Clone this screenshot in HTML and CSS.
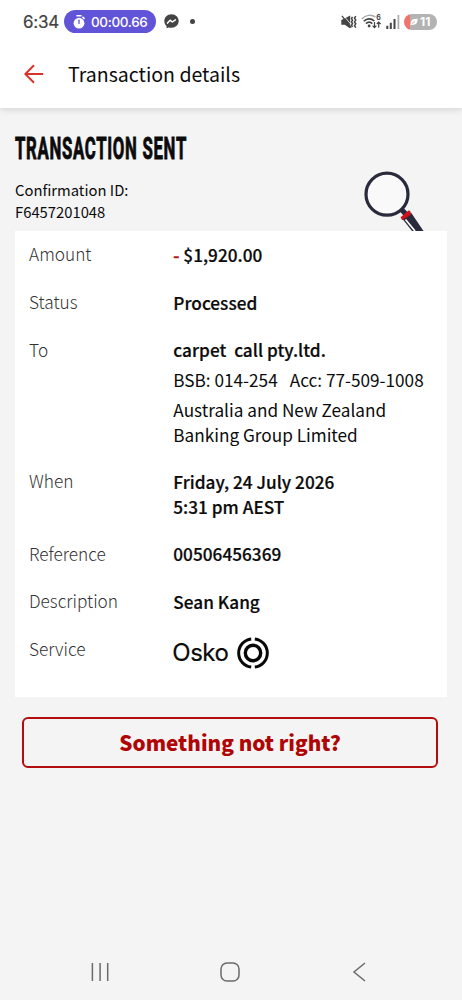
FILE: index.html
```html
<!DOCTYPE html>
<html lang="en">
<head>
<meta charset="utf-8">
<title>Transaction details</title>
<link rel="stylesheet" href="styles.css">
</head>
<body>
<div class="screen">
  <header class="top">
    <div class="statusbar">
      <span class="clock">6:34</span>
      <span class="timer">
        <svg class="timer-icon" width="12" height="14" viewBox="0 0 12 14"><circle cx="6" cy="8.2" r="5.4" fill="#fff"/><path d="M4 .8h4M10 2.4l1 1" stroke="#fff" stroke-width="1.6" stroke-linecap="round"/><path d="M6 5.2v3.2" stroke="#6254d8" stroke-width="1.3" stroke-linecap="round"/></svg>
        <span class="timer-text">00:00.66</span>
      </span>
      <svg class="messenger" width="15" height="15" viewBox="0 0 15 15"><path d="M7.5.3C3.300.3.3 3.300.3 7.100c0 2 .8 3.800 2.200 5l.1 2.200 2.100-.9c.9.300 1.800.4 2.800.4 4.200 0 7.200-3 7.200-6.700S11.700.3 7.500.3z" fill="#444"/><path d="M3.500 9.100l2.600-2.900 2.200 1.800 3.100-2.100" fill="none" stroke="#fff" stroke-width="1.500" stroke-linejoin="round" stroke-linecap="round"/></svg>
      <span class="dot"></span>
      <svg class="mute" width="16" height="14" viewBox="0 0 16 14"><path d="M.3 4.900L2.500 4 9.200.5v13L3.800 9.800H.3z" fill="#444"/><path d="M2.300.3l7.200 8.500" stroke="#fff" stroke-width=".8"/><path d="M.9.900l9.300 11.800" stroke="#444" stroke-width="1.300"/><path d="M11.500 1.800l-1 1.700 1 1.700-1 1.700 1 1.700-1 1.700 1 1.700M14.800 1.200l-1.300 1.900 1.300 1.900-1.300 1.900 1.300 1.900-1.300 1.900 1.300 1.900" fill="none" stroke="#444" stroke-width="1.500"/></svg>
      <svg class="wifi" width="21" height="15" viewBox="0 0 21 15"><path d="M.8 5C4.600.7 10.500.3 14.500 3" fill="none" stroke="#aaa" stroke-width="1.500"/><path d="M2.800 7.300c3-3.200 7.500-3.200 10.500-.3M5 9.600c2-2 4.400-2 6.300 0" fill="none" stroke="#444" stroke-width="1.600"/><circle cx="8.100" cy="12" r="1.400" fill="#444"/><path d="M13.500 8v5.500M11.600 11.700l1.900 2 1.900-2M17.700 13.800V8.300M15.800 10l1.900-2 1.900 2" fill="none" stroke="#444" stroke-width="1.200"/><text x="15.300" y="6.300" class="wifi-no">6</text></svg>
      <svg class="signal" width="14" height="14" viewBox="0 0 14 14"><path d="M1.300 10.800V14M4.800 7.800V14M8.500 4V14" stroke="#444" stroke-width="2"/><path d="M12.400 0v14" stroke="#aaa" stroke-width="1.700"/></svg>
      <span class="battery"><svg width="8" height="8" viewBox="0 0 8 8"><path d="M1 4C1.700.8 4.500 1 7.700.8 7.500 4.300 6.500 7 3.200 6.700 2 6.700 1.300 7 .3 7.400z" fill="#fff"/><path d="M1.500 6L5 3.500" stroke="#e88" stroke-width=".7"/></svg><span>11</span></span>
    </div>
    <div class="appbar">
      <svg class="back" width="20" height="20" viewBox="0 0 20 20"><path d="M19.200 10H1.500M10 1.300L1.300 10l8.700 8.700" fill="none" stroke="#d8322b" stroke-width="2"/></svg>
      <h1 class="bar-title">Transaction details</h1>
    </div>
  </header>
  <main class="main">
    <div class="summary">
      <div>
        <h2 class="heading">TRANSACTION SENT</h2>
        <p class="confirm">Confirmation ID:<br>F6457201048</p>
      </div>
      <svg class="glass" width="64" height="62" viewBox="0 0 64 62"><circle cx="25" cy="25.200" r="21" fill="#f9f9fa" stroke="#292a3b" stroke-width="3.200"/><path d="M37.500 42l4 4.500 4-3.500-4-4z" fill="#292a3b"/><path d="M43 47.500l6-4L61.500 62H50L40.500 50z" fill="#292a3b"/><path d="M43.500 50.500L53 62" stroke="#fff" stroke-width="1.700"/><path d="M38.600 48.200l1.500 3 8.800-5.500-.5-3.200-1.500-1.300z" fill="#cf1118"/></svg>
    </div>
    <dl class="card">
      <div class="row row-amount"><dt>Amount</dt><dd class="strong amount"><span class="minus">-</span> $1,920.00</dd></div>
      <div class="row"><dt>Status</dt><dd class="strong status">Processed</dd></div>
      <div class="row row-to"><dt>To</dt><dd><div class="strong payee">carpet&nbsp; call pty.ltd.</div><div class="account"><span>BSB: 014-254</span><span>Acc: 77-509-1008</span></div><div class="bank">Australia and New Zealand<br>Banking Group Limited</div></dd></div>
      <div class="row"><dt>When</dt><dd class="strong when">Friday, 24 July 2026<br>5:31 pm AEST</dd></div>
      <div class="row"><dt>Reference</dt><dd class="strong reference">00506456369</dd></div>
      <div class="row"><dt>Description</dt><dd class="strong description">Sean Kang</dd></div>
      <div class="row row-service"><dt>Service</dt><dd class="osko"><span class="osko-name">Osko</span><svg width="32" height="32" viewBox="0 0 32 32"><circle cx="16" cy="16" r="7.700" fill="none" stroke="#080808" stroke-width="3.400"/><path d="M14.200 1.900a14.200 14.200 0 0 0 0 28.200M17.800 1.900a14.200 14.200 0 0 1 0 28.200" fill="none" stroke="#080808" stroke-width="3"/></svg></dd></div>
    </dl>
    <button class="help">Something not right?</button>
  </main>
  <nav class="nav">
    <svg width="20" height="20" viewBox="0 0 20 20"><path d="M2.400 1v18M10.100 1v18M17.700 1v18" stroke="#6a6a6a" stroke-width="1.500"/></svg>
    <svg width="20" height="20" viewBox="0 0 20 20"><rect x="1" y="1" width="18" height="18" rx="6" fill="none" stroke="#6a6a6a" stroke-width="1.500"/></svg>
    <svg width="14" height="20" viewBox="0 0 14 20"><path d="M13 1L2 10l11 9" fill="none" stroke="#6a6a6a" stroke-width="1.500"/></svg>
  </nav>
</div>
</body>
</html>
```
FILE: styles.css
```css
* { box-sizing: border-box; margin: 0; padding: 0; }
body { background: #f4f4f4; color: #0b0b0b; font-family: "Noto Sans CJK SC", "Noto Sans", sans-serif; }
svg { display: block; flex: none; }
.screen { width: 462px; height: 1000px; display: flex; flex-direction: column; overflow: hidden; }
.top { height: 108px; background: #fff; box-shadow: 0 1px 7px rgba(0,0,0,.16); flex: none; }
.statusbar { height: 43px; padding-left: 23px; display: flex; align-items: center; font-family: Inter, Roboto, sans-serif; }
.clock { width: 41px; font-size: 17px; line-height: 20px; letter-spacing: -.2px; color: #424242; white-space: nowrap; -webkit-text-stroke: .2px #424242; }
.timer { width: 92px; height: 23px; border-radius: 12px; background: #6254d8; color: #fff; display: flex; align-items: center; padding-left: 9px; gap: 6px; }
.timer-text { font-size: 13.500px; line-height: 20px; font-weight: 500; letter-spacing: -.35px; white-space: nowrap; }
.messenger { margin-left: 8px; }
.dot { width: 5px; height: 5px; border-radius: 50%; background: #444; margin-left: 11px; }
.mute { margin-left: 146px; }
.wifi { margin-left: 4px; }
.wifi-no { font: bold 7px Inter, sans-serif; fill: #444; }
.signal { margin-left: 4px; }
.battery { margin-left: 4px; width: 33px; height: 16px; border-radius: 8px; background: linear-gradient(90deg, #f0736c 6px, #b3b3b3 6px); color: #fff; display: flex; align-items: center; padding-left: 6px; gap: 2px; font-size: 12px; line-height: 16px; font-weight: 700; }
.appbar { height: 62px; padding-left: 24px; display: flex; align-items: center; gap: 24px; }
.bar-title { font-size: 19.550px; line-height: 28px; font-weight: 400; padding-bottom: 1px; }
.main { flex: 1; padding: 26px 15px 0; }
.summary { height: 97px; display: flex; justify-content: space-between; padding-right: 21px; }
.heading { font-family: Roboto, sans-serif; font-weight: 700; font-size: 31px; line-height: 30px; width: 320px; white-space: nowrap; letter-spacing: 1.300px; -webkit-text-stroke: .9px #0b0b0b; transform: scaleX(.540); transform-origin: left center; }
.confirm { margin-top: 15px; font-size: 14.800px; line-height: 22px; }
.glass { margin-top: 35px; }
.card { height: 466px; background: #fff; padding: 10px 14px 0; font-size: 17.200px; line-height: 25px; }
.row { display: flex; margin-bottom: 22.600px; }
.row-amount { margin-bottom: 23px; }
.row dt { width: 144.300px; font-size: 17.250px; font-weight: 300; color: #333; flex: none; }
.row dd { white-space: nowrap; }
.row .strong { font-weight: 500; -webkit-text-stroke: .2px #0b0b0b; }
.row dd.strong { padding-top: .6px; margin-bottom: -.6px; letter-spacing: .02px; }
.row .minus { color: #b5121b; -webkit-text-stroke: .4px #b5121b; }
.payee { letter-spacing: .04px; }
.row-to { margin-bottom: 21.500px; }
.account { display: flex; gap: 12px; margin: 5px 0; }
.osko { display: flex; align-items: center; gap: 9px; height: 34px; }
.osko-name { font-family: Inter, sans-serif; font-size: 24px; line-height: 32px; letter-spacing: -.5px; margin-left: -1px; -webkit-text-stroke: .2px #0b0b0b; }
.help { display: block; width: 416px; height: 51px; margin: 20px 0 0 7px; padding-bottom: 2px; border: 2px solid #b30d10; border-radius: 6px; background: transparent; color: #b00505; font: 900 20.700px/28px "Noto Sans CJK SC", "Noto Sans", sans-serif; }
.nav { height: 56px; display: flex; justify-content: space-between; align-items: center; padding: 0 96px 0 90px; flex: none; }
.nav svg:nth-child(2) { margin-right: 3px; }
```
